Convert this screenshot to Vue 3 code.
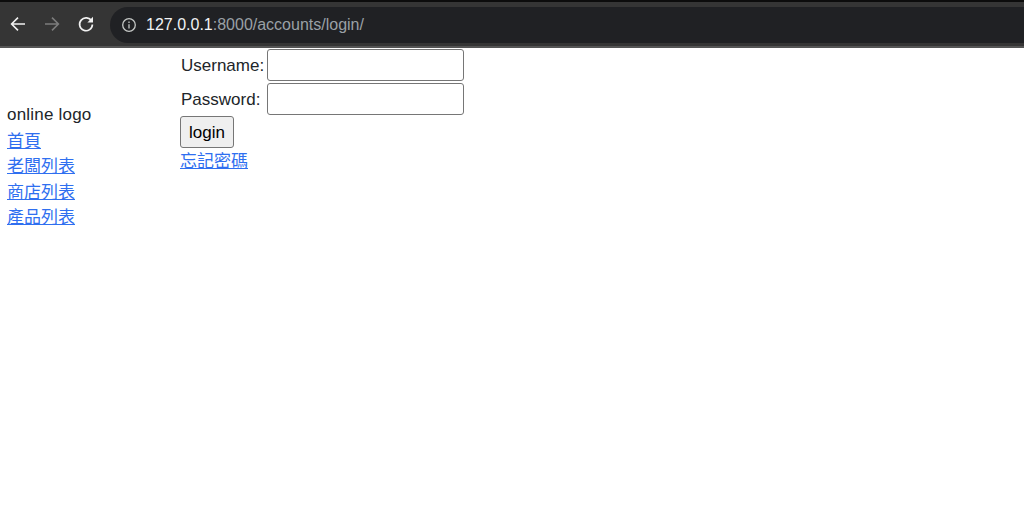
<script setup>
const links = ['首頁', '老闆列表', '商店列表', '產品列表']
</script>

<template>
  <div class="page">
    <header class="toolbar">
      <nav class="nav-icons">
        <svg class="icon" viewBox="0 0 18 18" width="18" height="18" fill="none" stroke="#f1f1f1" stroke-width="1.6">
          <path d="M16 9H2.8M9 2.6 2.6 9 9 15.4" />
        </svg>
        <svg class="icon" viewBox="0 0 18 18" width="18" height="18" fill="none" stroke="#7c7c7c" stroke-width="1.6">
          <path d="M2 9h13.2M9 2.6 15.4 9 9 15.4" />
        </svg>
        <svg class="icon" viewBox="0 0 18 18" width="18" height="18" fill="none" stroke="#f1f1f1" stroke-width="1.7">
          <path d="M14.6 6.2A6.4 6.4 0 1 0 15.4 9.4" />
          <path d="M16 1.8v5.6h-5.6z" fill="#f1f1f1" stroke="none" />
        </svg>
      </nav>
      <div class="omnibox">
        <svg class="info" viewBox="0 0 14 14" width="14" height="14" fill="none" stroke="#c4c7c5" stroke-width="1.3">
          <circle cx="7" cy="7" r="6.3" />
          <path d="M7 6.2v4.2M7 3.4v1.5" />
        </svg>
        <span class="url"><b class="host">127.0.0.1</b>:8000/accounts/login/</span>
      </div>
    </header>
    <div class="content">
      <aside class="sidebar">
        <div class="logo">online logo</div>
        <div v-for="link in links" :key="link"><a href="#">{{ link }}</a></div>
      </aside>
      <main class="main">
        <form class="form" @submit.prevent>
          <div class="row">
            <label class="label">Username:</label>
            <input class="input" type="text" />
          </div>
          <div class="row">
            <label class="label">Password:</label>
            <input class="input" type="password" />
          </div>
          <button class="btn" type="submit">login</button>
        </form>
        <a href="#" class="forgot">忘記密碼</a>
      </main>
    </div>
  </div>
</template>

<style>
html, body { margin: 0; background: #fff; }
</style>

<style scoped>
.page {
  width: 1024px;
  height: 527px;
  overflow: hidden;
  background: #fff;
  font-family: "Liberation Sans", Arial, "Noto Sans CJK TC", sans-serif;
  font-size: 17px;
  line-height: 25.5px;
  color: #212529;
}
.toolbar {
  box-sizing: border-box;
  height: 48px;
  display: flex;
  align-items: center;
  background: #353535;
  border-top: 2px solid #0c0c0c;
  border-bottom: 2px solid #555;
}
.nav-icons {
  width: 110px;
  flex: none;
  box-sizing: border-box;
  padding-left: 9px;
  display: flex;
  gap: 16px;
}
.icon { display: block; }
.omnibox {
  flex: 1;
  height: 36px;
  margin-top: 1px;
  display: flex;
  align-items: center;
  background: #202124;
  border-radius: 18px 0 0 18px;
  padding-left: 12px;
}
.info { margin-right: 10px; }
.url {
  font-size: 16px;
  color: #9aa0a6;
  padding-top: 1px;
}
.host {
  font-weight: 400;
  color: #f1f3f4;
}
.content {
  display: flex;
  align-items: flex-start;
}
.sidebar {
  width: 173px;
  flex: none;
  padding: 54px 0 0 7px;
}
.logo {
  letter-spacing: 0.2px;
  margin-bottom: 1px;
}
.main {
  padding-top: 1px;
}
.form {
  display: flex;
  flex-direction: column;
  align-items: flex-start;
}
.row {
  display: flex;
  align-items: center;
  height: 32px;
  margin-bottom: 2px;
  padding-left: 1px;
}
.row:nth-child(2) { margin-bottom: 1px; }
.label {
  width: 86px;
  flex: none;
  padding-top: 2px;
}
.input {
  box-sizing: border-box;
  width: 197px;
  height: 32px;
  border: 1px solid #767676;
  border-radius: 3px;
  background: #fff;
  padding: 0 4px;
  margin: 0;
}
.btn {
  box-sizing: border-box;
  width: 54px;
  height: 32px;
  margin: 0;
  padding: 2px 0 0;
  border: 1px solid #767676;
  border-radius: 3px;
  background: #efefef;
  color: #000;
  font: inherit;
}
.forgot {
  display: block;
  margin-top: 1px;
  line-height: 25.5px;
  width: fit-content;
}
a {
  color: #2f6ff0;
  text-decoration: underline;
}
</style>
